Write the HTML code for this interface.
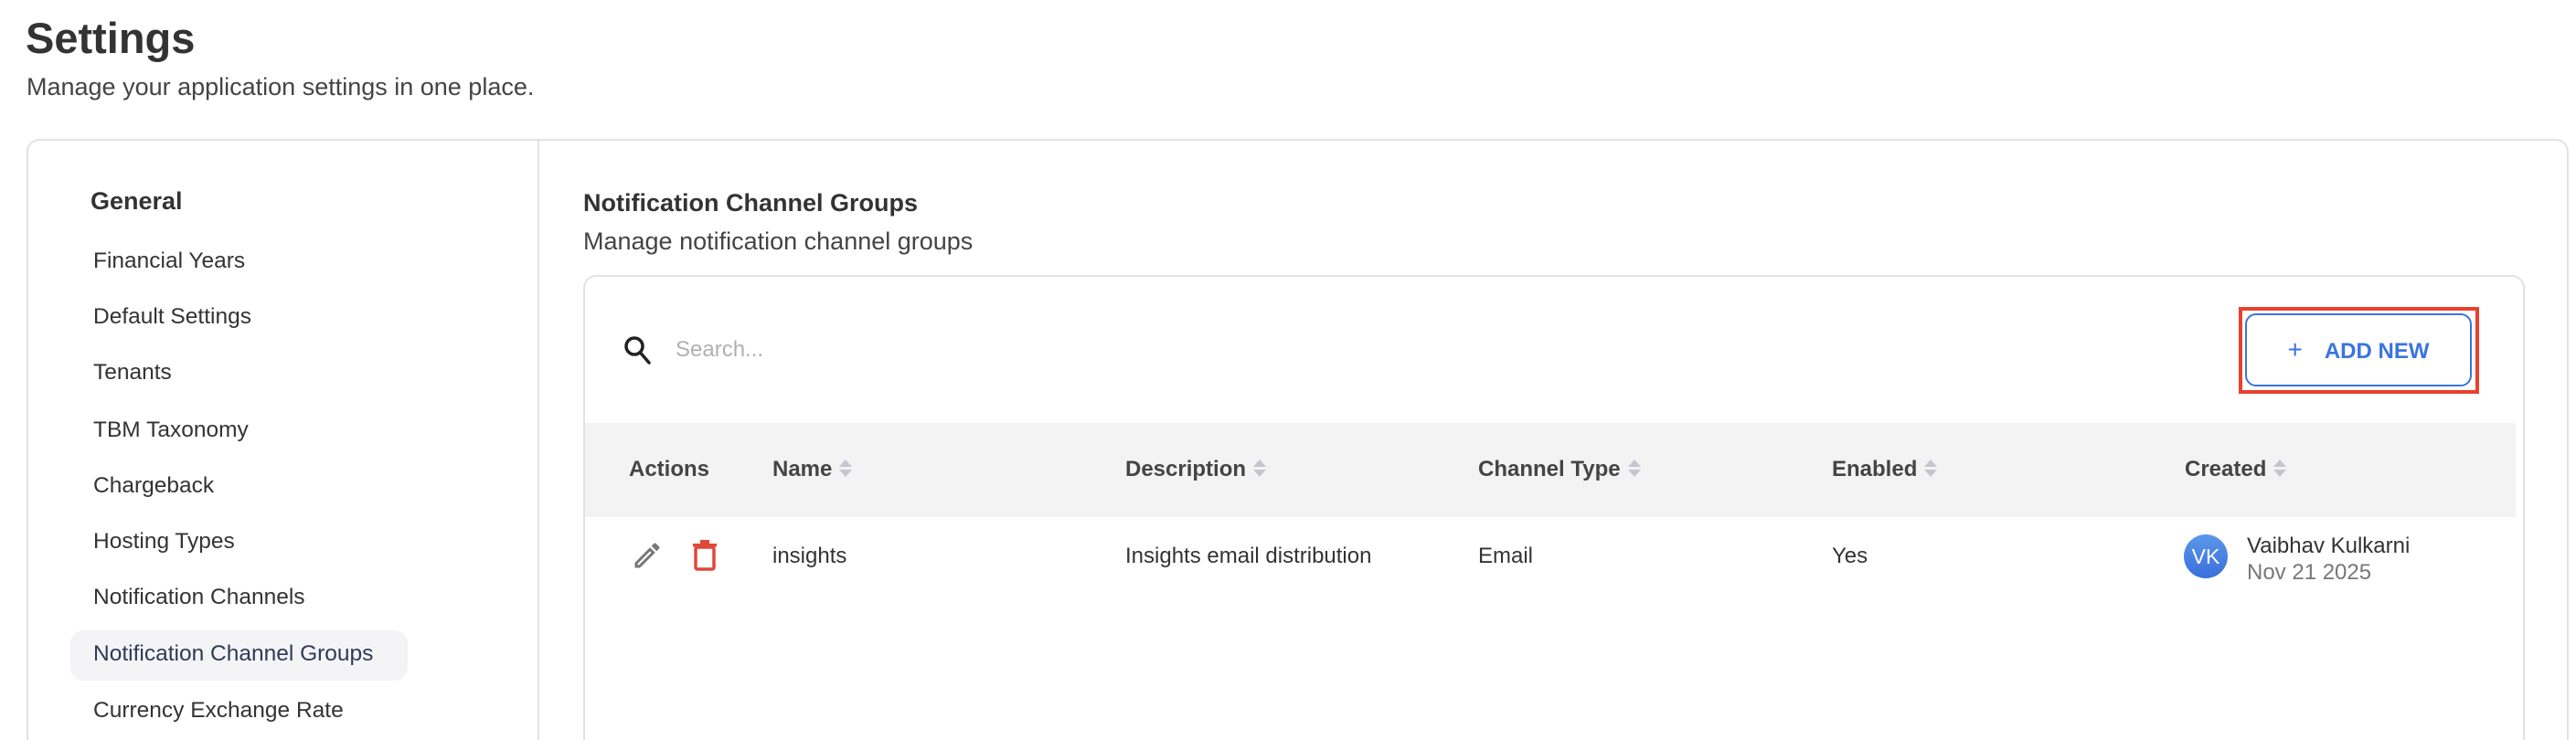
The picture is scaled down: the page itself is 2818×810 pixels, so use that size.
<!DOCTYPE html>
<html style="width:2818px;height:810px;overflow:hidden"><head><meta charset="utf-8"><style>
*{box-sizing:border-box;margin:0;padding:0}
body{width:2818px;height:810px;overflow:hidden;background:#fff;font-family:"Liberation Sans",sans-serif;color:#333;position:relative}
.a{position:absolute;white-space:nowrap}
.mi{position:absolute;left:102px;font-size:24.5px;color:#333;line-height:30px}
.th{position:absolute;top:499px;font-size:24px;font-weight:bold;color:#444;line-height:30px}
.td{position:absolute;top:594px;font-size:24px;color:#333;line-height:30px}
.s{display:inline-block;vertical-align:middle;margin-left:8px;width:12px;height:22px;position:relative;top:-2px}
.s:before{content:"";position:absolute;left:0;top:1px;border-left:7px solid transparent;border-right:7px solid transparent;border-bottom:8px solid #c5c5d2}
.s:after{content:"";position:absolute;left:0;top:12px;border-left:7px solid transparent;border-right:7px solid transparent;border-top:8px solid #c5c5d2}
</style></head><body>
<div class="a" style="left:28px;top:14px;font-size:47px;font-weight:bold;color:#333">Settings</div>
<div class="a" style="left:29px;top:80px;font-size:27px;color:#444">Manage your application settings in one place.</div>

<div class="a" style="left:29px;top:152px;width:2781px;height:658px;border:2px solid #e2e2e2;border-bottom:none;border-radius:14px 14px 0 0"></div>
<div class="a" style="left:588px;top:153px;width:2px;height:657px;background:#e2e2e2"></div>

<div class="a" style="left:99px;top:205px;font-size:27px;font-weight:bold;color:#333">General</div>
<div class="a" style="left:77px;top:690px;width:369px;height:55px;background:#f4f4f7;border-radius:14px"></div>
<div class="mi" style="top:271px">Financial Years</div>
<div class="mi" style="top:332px">Default Settings</div>
<div class="mi" style="top:393px">Tenants</div>
<div class="mi" style="top:456px">TBM Taxonomy</div>
<div class="mi" style="top:517px">Chargeback</div>
<div class="mi" style="top:578px">Hosting Types</div>
<div class="mi" style="top:639px">Notification Channels</div>
<div class="mi" style="top:701px;color:#2f3a55">Notification Channel Groups</div>
<div class="mi" style="top:763px">Currency Exchange Rate</div>

<div class="a" style="left:638px;top:207px;font-size:27px;font-weight:bold;color:#333">Notification Channel Groups</div>
<div class="a" style="left:638px;top:249px;font-size:27px;color:#444">Manage notification channel groups</div>

<div class="a" style="left:638px;top:301px;width:2124px;height:509px;border:2px solid #e2e2e2;border-bottom:none;border-radius:14px 14px 0 0"></div>

<svg class="a" style="left:682px;top:367px" width="32" height="34" viewBox="0 0 32 34"><circle cx="12" cy="12" r="9" fill="none" stroke="#222" stroke-width="3.5"/><path d="M18.5 19 L28 30" stroke="#222" stroke-width="3.5" stroke-linecap="round"/></svg>
<div class="a" style="left:739px;top:369px;font-size:24px;color:#b0b0b0">Search...</div>

<div class="a" style="left:2449px;top:336px;width:263px;height:95px;border:4px solid #e8412d"></div>
<div class="a" style="left:2456px;top:343px;width:248px;height:80px;border:2px solid #3a74df;border-radius:12px;color:#3a74df;font-size:24px;font-weight:bold;line-height:76px;text-align:center"><span style="font-weight:normal;margin-right:24px;font-size:28px">+</span>ADD NEW</div>

<div class="a" style="left:640px;top:463px;width:2112px;height:103px;background:#f3f3f3"></div>
<div class="th" style="left:688px">Actions</div>
<div class="th" style="left:845px">Name<span class="s"></span></div>
<div class="th" style="left:1231px">Description<span class="s"></span></div>
<div class="th" style="left:1617px">Channel Type<span class="s"></span></div>
<div class="th" style="left:2004px">Enabled<span class="s"></span></div>
<div class="th" style="left:2390px">Created<span class="s"></span></div>

<svg class="a" style="left:690px;top:590px" width="36" height="36" viewBox="0 0 24 24"><path d="M3 17.25V21h3.75L17.81 9.94l-3.75-3.75L3 17.25zM20.71 7.04a1 1 0 0 0 0-1.41l-2.34-2.34a1 1 0 0 0-1.41 0l-1.83 1.83 3.75 3.75 1.83-1.83z" fill="#777"/><path d="M5 19V18l9-9 1 1-9 9z" fill="#fff"/></svg>
<svg class="a" style="left:756px;top:590px" width="30" height="36" viewBox="0 0 30 36"><rect x="5" y="9" width="20" height="24" rx="2" fill="none" stroke="#e0483a" stroke-width="3.5"/><rect x="2" y="5" width="26" height="3.5" fill="#e0483a"/><rect x="10" y="1" width="10" height="5" fill="#e0483a"/></svg>

<div class="td" style="left:845px">insights</div>
<div class="td" style="left:1231px">Insights email distribution</div>
<div class="td" style="left:1617px">Email</div>
<div class="td" style="left:2004px">Yes</div>
<div class="a" style="left:2389px;top:585px;width:48px;height:48px;border-radius:50%;background:linear-gradient(#5b97e8,#3a6fdc);color:#fff;font-size:23px;text-align:center;line-height:48px">VK</div>
<div class="a" style="left:2458px;top:584px;font-size:24px;color:#333">Vaibhav Kulkarni</div>
<div class="a" style="left:2458px;top:613px;font-size:24px;color:#777">Nov 21 2025</div>
</body></html>
